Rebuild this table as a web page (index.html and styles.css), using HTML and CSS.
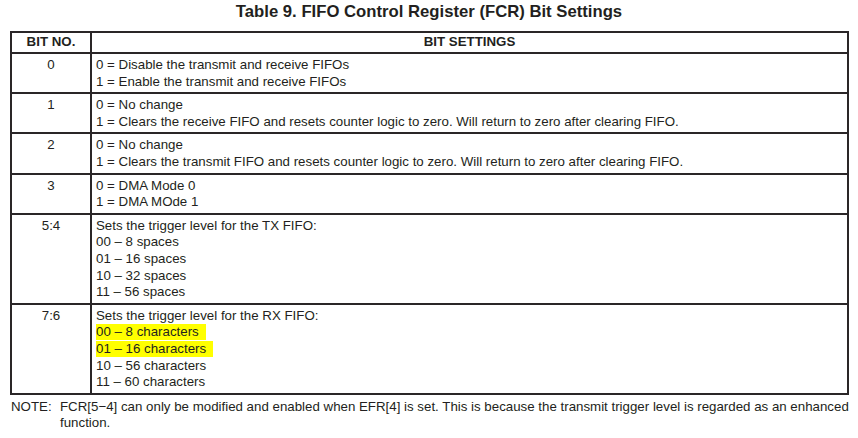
FILE: index.html
```html
<!DOCTYPE html>
<html>
<head>
<meta charset="utf-8">
<link rel="stylesheet" href="styles.css">
</head>
<body>
<h1 class="title">Table 9. FIFO Control Register (FCR) Bit Settings</h1>
<table class="reg">
  <thead>
    <tr><th class="c-bit">BIT NO.</th><th class="c-set">BIT SETTINGS</th></tr>
  </thead>
  <tbody>
    <tr><td class="c-bit">0</td><td class="c-set">0 = Disable the transmit and receive FIFOs<br>1 = Enable the transmit and receive FIFOs</td></tr>
    <tr><td class="c-bit">1</td><td class="c-set">0 = No change<br>1 = Clears the receive FIFO and resets counter logic to zero. Will return to zero after clearing FIFO.</td></tr>
    <tr><td class="c-bit">2</td><td class="c-set">0 = No change<br>1 = Clears the transmit FIFO and resets counter logic to zero. Will return to zero after clearing FIFO.</td></tr>
    <tr><td class="c-bit">3</td><td class="c-set">0 = DMA Mode 0<br>1 = DMA MOde 1</td></tr>
    <tr><td class="c-bit">5:4</td><td class="c-set">Sets the trigger level for the TX FIFO:<br>00 – 8 spaces<br>01 – 16 spaces<br>10 – 32 spaces<br>11 – 56 spaces</td></tr>
    <tr><td class="c-bit">7:6</td><td class="c-set">Sets the trigger level for the RX FIFO:<br><span class="hl">00 – 8 characters</span><br><span class="hl">01 – 16 characters</span><br>10 – 56 characters<br>11 – 60 characters</td></tr>
  </tbody>
</table>
<div class="note">
  <span class="note-label">NOTE:</span>
  <span class="note-text">FCR[5−4] can only be modified and enabled when EFR[4] is set. This is because the transmit trigger level is regarded as an enhanced function.</span>
</div>
</body>
</html>
```
FILE: styles.css
```css
html, body {
  margin: 0;
  padding: 0;
  background: #ffffff;
}
body {
  font-family: "Liberation Sans", Arial, sans-serif;
  color: #231f20;
  width: 858px;
}
.title {
  margin: 0;
  padding-top: 2px;
  height: 30.5px;
  font-size: 16.7px;
  line-height: 20px;
  font-weight: bold;
  text-align: center;
  box-sizing: border-box;
}
.reg {
  margin-left: 10px;
  width: 839px;
  border-collapse: collapse;
  border: 2.5px solid #231f20;
  font-size: 13.3px;
  line-height: 16.6px;
}
.reg th, .reg td {
  border: 2px solid #2a2627;
  vertical-align: top;
}
.reg th {
  font-weight: bold;
  text-align: center;
  padding: 1px 4px 2px;
}
.reg td {
  padding: 3px 4px 2px 4px;
}
.reg .c-bit {
  width: 70px;
  text-align: center;
}
.reg td.c-set {
  text-align: left;
}
.hl {
  background: #ffff00;
  display: inline-block;
  padding-right: 7px;
  line-height: 16px;
}
.note {
  display: flex;
  font-size: 13.3px;
  line-height: 16px;
  padding: 4px 0 0 11px;
}
.note-label {
  flex: 0 0 49px;
}
.note-text {
  width: 795px;
}
```
